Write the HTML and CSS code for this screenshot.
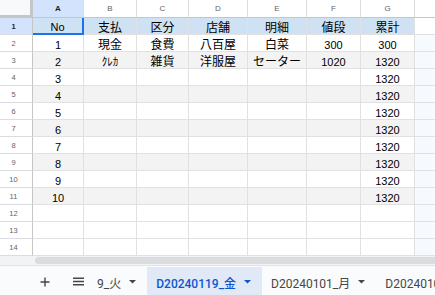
FILE: index.html
```html
<!DOCTYPE html>
<html lang="ja">
<head>
<meta charset="utf-8">
<link rel="stylesheet" href="styles.css">
</head>
<body>
<div class="sheet">
  <div class="grid">
    <div class="corner"></div>
    <div class="ch sel">A</div><div class="ch">B</div><div class="ch">C</div><div class="ch">D</div><div class="ch">E</div><div class="ch">F</div><div class="ch">G</div><div class="ch last"></div>

    <div class="rh sel">1</div>
    <div class="c b a1">No</div><div class="c b cj">支払</div><div class="c b cj">区分</div><div class="c b cj">店舗</div><div class="c b cj">明細</div><div class="c b cj">値段</div><div class="c b cj">累計</div><div class="c hw"></div>

    <div class="rh">2</div>
    <div class="c">1</div><div class="c cj">現金</div><div class="c cj">食費</div><div class="c cj">八百屋</div><div class="c cj">白菜</div><div class="c">300</div><div class="c">300</div><div class="c h"></div>

    <div class="rh">3</div>
    <div class="c g">2</div><div class="c g">ｸﾚｶ</div><div class="c g cj">雑貨</div><div class="c g cj">洋服屋</div><div class="c g cj">セーター</div><div class="c g">1020</div><div class="c g">1320</div><div class="c h"></div>

    <div class="rh">4</div>
    <div class="c">3</div><div class="c"></div><div class="c"></div><div class="c"></div><div class="c"></div><div class="c"></div><div class="c">1320</div><div class="c h"></div>

    <div class="rh">5</div>
    <div class="c g">4</div><div class="c g"></div><div class="c g"></div><div class="c g"></div><div class="c g"></div><div class="c g"></div><div class="c g">1320</div><div class="c h"></div>

    <div class="rh">6</div>
    <div class="c">5</div><div class="c"></div><div class="c"></div><div class="c"></div><div class="c"></div><div class="c"></div><div class="c">1320</div><div class="c h"></div>

    <div class="rh">7</div>
    <div class="c g">6</div><div class="c g"></div><div class="c g"></div><div class="c g"></div><div class="c g"></div><div class="c g"></div><div class="c g">1320</div><div class="c h"></div>

    <div class="rh">8</div>
    <div class="c">7</div><div class="c"></div><div class="c"></div><div class="c"></div><div class="c"></div><div class="c"></div><div class="c">1320</div><div class="c h"></div>

    <div class="rh">9</div>
    <div class="c g">8</div><div class="c g"></div><div class="c g"></div><div class="c g"></div><div class="c g"></div><div class="c g"></div><div class="c g">1320</div><div class="c h"></div>

    <div class="rh">10</div>
    <div class="c">9</div><div class="c"></div><div class="c"></div><div class="c"></div><div class="c"></div><div class="c"></div><div class="c">1320</div><div class="c h"></div>

    <div class="rh">11</div>
    <div class="c g">10</div><div class="c g"></div><div class="c g"></div><div class="c g"></div><div class="c g"></div><div class="c g"></div><div class="c g">1320</div><div class="c h"></div>

    <div class="rh">12</div>
    <div class="c"></div><div class="c"></div><div class="c"></div><div class="c"></div><div class="c"></div><div class="c"></div><div class="c"></div><div class="c h"></div>

    <div class="rh">13</div>
    <div class="c"></div><div class="c"></div><div class="c"></div><div class="c"></div><div class="c"></div><div class="c"></div><div class="c"></div><div class="c h"></div>

    <div class="rh">14</div>
    <div class="c"></div><div class="c"></div><div class="c"></div><div class="c"></div><div class="c"></div><div class="c"></div><div class="c"></div><div class="c h"></div>
  </div>

  <div class="hscroll"><div class="thumb"></div></div>

  <div class="tabs">
    <div class="ibtn">
      <svg width="10" height="10" viewBox="0 0 10 10"><path d="M5 0.5V9.5M0.5 5H9.5" stroke="#444746" stroke-width="1.4" fill="none"/></svg>
    </div>
    <div class="ibtn">
      <svg width="11" height="9" viewBox="0 0 11 9"><path d="M0 1.2H11M0 4.5H11M0 7.8H11" stroke="#444746" stroke-width="1.4" fill="none"/></svg>
    </div>
    <div class="tablist">
      <div class="tab first"><span>D20240109_火</span><svg class="arr" width="7" height="4" viewBox="0 0 7 4"><path d="M0 0H7L3.5 3.5Z" fill="currentColor"/></svg></div>
      <div class="tab act"><span>D20240119_金</span><svg class="arr" width="7" height="4" viewBox="0 0 7 4"><path d="M0 0H7L3.5 3.5Z" fill="currentColor"/></svg></div>
      <div class="tab"><span>D20240101_月</span><svg class="arr" width="7" height="4" viewBox="0 0 7 4"><path d="M0 0H7L3.5 3.5Z" fill="currentColor"/></svg></div>
      <div class="tab"><span>D20240102_火</span><svg class="arr" width="7" height="4" viewBox="0 0 7 4"><path d="M0 0H7L3.5 3.5Z" fill="currentColor"/></svg></div>
    </div>
  </div>
</div>
</body>
</html>
```

FILE: styles.css
```css
html, body {
  margin: 0;
  padding: 0;
  background: #ffffff;
}

body {
  font-family: "Liberation Sans", "Noto Sans CJK JP", sans-serif;
}

.sheet {
  width: 435px;
  height: 295px;
  overflow: hidden;
  display: flex;
  flex-direction: column;
}

.grid {
  display: grid;
  grid-template-columns: 33px 51px 53px 52px 59px 59px 54px 54px 1fr;
  grid-template-rows: 18px repeat(14, 17px);
}

.grid > div {
  box-sizing: border-box;
  min-width: 0;
  overflow: hidden;
  white-space: nowrap;
}

.corner {
  background: #f8f9fa;
  border-right: 3px solid #c4c7c5;
  border-bottom: 3px solid #c4c7c5;
}

.ch {
  border-right: 1px solid #dadce0;
  border-bottom: 1px solid #c4c7c5;
  font-size: 8px;
  color: #5f6368;
  display: flex;
  align-items: center;
  justify-content: center;
  background: #ffffff;
}

.ch.last {
  border-right: none;
}

.ch.sel {
  background: #d3e3fd;
  color: #1f1f1f;
  font-weight: bold;
}

.rh {
  border-right: 1px solid #c4c7c5;
  border-bottom: 1px solid #dadce0;
  font-size: 7.5px;
  color: #5f6368;
  display: flex;
  align-items: center;
  justify-content: center;
  padding-right: 5px;
  background: #ffffff;
}

.rh.sel {
  background: #d3e3fd;
  color: #1f1f1f;
  font-weight: bold;
}

.c {
  border-right: 1px solid #e1e1e1;
  border-bottom: 1px solid #e1e1e1;
  font-size: 11px;
  line-height: 11px;
  color: #000000;
  display: flex;
  align-items: flex-end;
  justify-content: center;
  background: #ffffff;
}

.c.cj {
  font-size: 12px;
}

.c.b {
  background: #cfe2f3;
}

.c.g {
  background: #f3f3f3;
}

.c.h {
  background: #f6f9fe;
  border-right: none;
}

.c.hw {
  border-right: none;
}

.c.a1 {
  border-right: 2px solid #1a73e8;
  border-bottom: 2px solid #1a73e8;
}

.hscroll {
  box-sizing: border-box;
  height: 10px;
  background: #f1f3f4;
  border-bottom: 1px solid #e3e3e3;
  padding: 1px 0 1px 35px;
}

.thumb {
  height: 100%;
  background: #dadce0;
  border-radius: 4px 0 0 4px;
}

.tabs {
  height: 29px;
  background: #f9fbfd;
  display: flex;
  padding-left: 32px;
  gap: 7px;
}

.ibtn {
  width: 26px;
  display: flex;
  align-items: center;
  justify-content: center;
  margin-top: 2px;
}

.tablist {
  flex: 1;
  min-width: 0;
  overflow: hidden;
  display: flex;
  margin-left: -1px;
}

.tab {
  flex-shrink: 0;
  display: flex;
  align-items: center;
  gap: 8px;
  padding: 2px 11px 0 9px;
  font-family: Roboto, "Noto Sans CJK JP", sans-serif;
  font-size: 12px;
  color: #444746;
  white-space: nowrap;
  margin-top: 1px;
}

.tab.first {
  margin-left: -64px;
}

.tab.act {
  background: #e1e9f7;
  color: #0b57d0;
  font-weight: 500;
}

.arr {
  display: block;
}
```
